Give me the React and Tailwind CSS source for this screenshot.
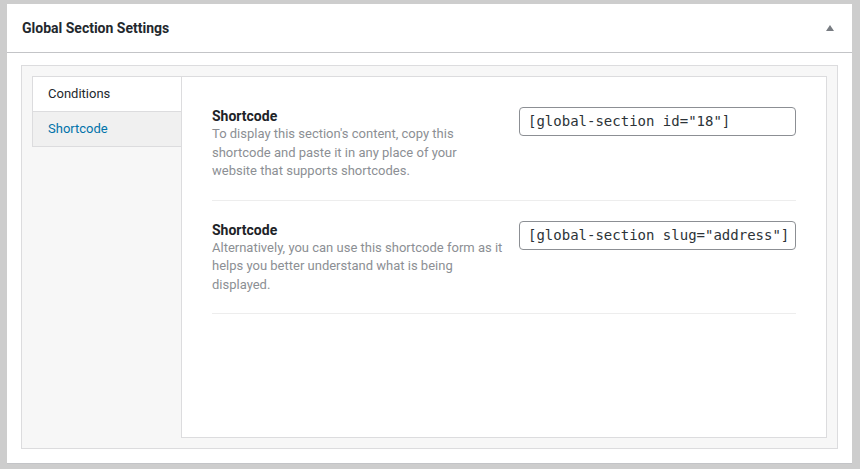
export default function App() {
  const rows = [
    {
      title: "Shortcode",
      desc: "To display this section's content, copy this shortcode and paste it in any place of your website that supports shortcodes.",
      code: '[global-section id="18"]',
    },
    {
      title: "Shortcode",
      desc: "Alternatively, you can use this shortcode form as it helps you better understand what is being displayed.",
      code: '[global-section slug="address"]',
    },
  ];

  return (
    <div className="w-[860px] h-[469px] bg-[#cdcdcd] pt-[4px] pl-[7px] pr-[8px] pb-[5px] font-['Roboto',sans-serif]">
      <div className="h-full bg-white border-b border-[#c3c4c7] flex flex-col">
        {/* Header */}
        <div className="h-[49px] flex items-center justify-between pl-[15px] pr-[17px] border-b border-[#c3c4c7] shrink-0">
          <h2 className="text-[14px] font-bold text-[#23282d]">Global Section Settings</h2>
          <svg width="10" height="8" viewBox="0 0 10 8" className="text-[#787c82]">
            <path d="M5 1 L9 7 L1 7 Z" fill="currentColor" />
          </svg>
        </div>

        {/* Body */}
        <div className="flex-1 px-[14px] pt-[12px] pb-[14px]">
          <div className="h-full bg-[#f7f7f7] border border-[#dcdcde] p-[10px]">
            <div className="h-full flex">
              {/* Tabs */}
              <div className="w-[149px] shrink-0 self-start border-l border-t border-[#dcdcde] text-[13px]">
                <div className="h-[35px] flex items-center pl-[15px] bg-white border-b border-[#dcdcde] text-[#23282d]">
                  Conditions
                </div>
                <div className="h-[35px] flex items-center pl-[15px] bg-[#f0f0f0] border-b border-[#dcdcde] text-[#0073aa]">
                  Shortcode
                </div>
              </div>

              {/* Content */}
              <div className="flex-1 bg-white border border-[#dcdcde] px-[30px] pt-[10px]">
                {rows.map((r, i) => (
                  <div key={i} className="flex pt-[20px] pb-[19px] border-b border-[#ededed]">
                    <div className="w-[292px]">
                      <div className="text-[14px] leading-[18px] font-bold text-[#1d2327]">{r.title}</div>
                      <p className="text-[13px] leading-[18.5px] text-[#8c8f94]">{r.desc}</p>
                    </div>
                    <div className="ml-auto w-[277px]">
                      <div className="h-[29px] flex items-center pl-[8px] border border-[#8c8f94] rounded-[4px] text-[14px] text-[#2c3338] font-['DejaVu_Sans_Mono',monospace] whitespace-nowrap overflow-hidden">
                        {r.code}
                      </div>
                    </div>
                  </div>
                ))}
              </div>
            </div>
          </div>
        </div>
      </div>
    </div>
  );
}
